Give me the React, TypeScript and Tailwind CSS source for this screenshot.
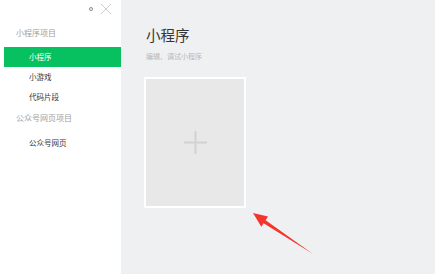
const font = "font-['Noto_Sans_CJK_SC','Noto_Sans',sans-serif]";

function NavLabel({ children, className = "" }: { children: string; className?: string }) {
  return <div className={`pl-4 text-[8px] leading-[10px] text-[#a0a0a0] ${className}`}>{children}</div>;
}

function NavItem({ children, active = false }: { children: string; active?: boolean }) {
  return (
    <div
      className={`ml-1 flex h-5 items-center pl-[25px] text-[7.5px] ${
        active ? "bg-[#07c160] text-white" : "text-[#353535]"
      }`}
    >
      {children}
    </div>
  );
}

export default function App() {
  return (
    <div className={`relative flex h-[274px] w-[435px] overflow-hidden bg-[#eff0f2] ${font}`}>
      <aside className="flex w-[121px] shrink-0 flex-col bg-white">
        <div className="flex h-[28px] items-start justify-end gap-[7px] pr-[9px] pt-[3px]">
          <span className="mt-[4px] h-[4px] w-[4px] rounded-full border border-[#8a8a8a]" />
          <svg width="12" height="12" viewBox="0 0 12 12" className="text-[#c8c8c8]">
            <path d="M1 1 L11 11 M11 1 L1 11" stroke="currentColor" strokeWidth="0.9" />
          </svg>
        </div>
        <NavLabel>小程序项目</NavLabel>
        <div className="mt-[9px]">
          <NavItem active>小程序</NavItem>
          <NavItem>小游戏</NavItem>
          <NavItem>代码片段</NavItem>
        </div>
        <NavLabel className="mt-[6px]">公众号网页项目</NavLabel>
        <div className="mt-[10px]">
          <NavItem>公众号网页</NavItem>
        </div>
      </aside>

      <main className="flex flex-col pl-[25px] pt-[25px]">
        <h1 className="text-[14.5px] leading-[20px] text-[#353535]">小程序</h1>
        <p className="mt-[7px] text-[7px] leading-[9px] text-[#b8b8b8]">编辑、调试小程序</p>
        <div className="-ml-[2px] mt-[16px] flex h-[131px] w-[102px] items-center justify-center border-2 border-white bg-[#e8e8e8]">
          <svg width="23" height="23" viewBox="0 0 23 23">
            <path d="M11.5 0 V23 M0 11.5 H23" stroke="#d2d2d2" strokeWidth="2" />
          </svg>
        </div>
      </main>

      <svg className="pointer-events-none absolute left-0 top-0" width="435" height="274" viewBox="0 0 435 274">
        <polygon
          points="253,213 268,216.5 265.6,220.2 313,254 263.6,223.2 261.3,226.7"
          fill="#f5352c"
        />
      </svg>
    </div>
  );
}
